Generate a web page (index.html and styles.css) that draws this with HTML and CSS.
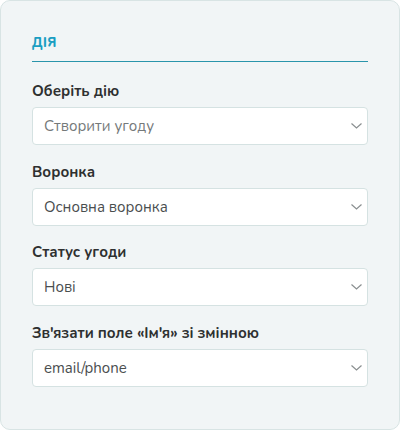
FILE: index.html
```html
<!DOCTYPE html>
<html lang="uk">
<head>
<meta charset="utf-8">
<link rel="stylesheet" href="styles.css">
</head>
<body>
<div class="card">
  <div class="title">Дія</div>
  <div class="fields">
    <div class="field">
      <div class="label">Оберіть дію</div>
      <div class="select placeholder"><span>Створити угоду</span><svg class="chev" width="11" height="6" viewBox="0 0 11 6"><path d="M0.5 0.5 L5.5 5 L10.5 0.5" fill="none" stroke="#8a8f90" stroke-width="1.2"/></svg></div>
    </div>
    <div class="field">
      <div class="label">Воронка</div>
      <div class="select"><span>Основна воронка</span><svg class="chev" width="11" height="6" viewBox="0 0 11 6"><path d="M0.5 0.5 L5.5 5 L10.5 0.5" fill="none" stroke="#8a8f90" stroke-width="1.2"/></svg></div>
    </div>
    <div class="field">
      <div class="label">Статус угоди</div>
      <div class="select"><span>Нові</span><svg class="chev" width="11" height="6" viewBox="0 0 11 6"><path d="M0.5 0.5 L5.5 5 L10.5 0.5" fill="none" stroke="#8a8f90" stroke-width="1.2"/></svg></div>
    </div>
    <div class="field">
      <div class="label">Зв'язати поле «Ім'я» зі змінною</div>
      <div class="select"><span>email/phone</span><svg class="chev" width="11" height="6" viewBox="0 0 11 6"><path d="M0.5 0.5 L5.5 5 L10.5 0.5" fill="none" stroke="#8a8f90" stroke-width="1.2"/></svg></div>
    </div>
  </div>
</div>
</body>
</html>
```
FILE: styles.css
```css
html, body {
  margin: 0;
  padding: 0;
  background: #ffffff;
}
body {
  font-family: "Nunito", "Lato", "Noto Sans", sans-serif;
}
.card {
  box-sizing: border-box;
  width: 400px;
  height: 430px;
  background: #f1f5f6;
  border: 1px solid #d8e4e4;
  border-radius: 10px;
  padding: 33px 31px 0 31px;
}
.title {
  font-size: 13px;
  font-weight: 800;
  text-transform: uppercase;
  letter-spacing: 0.4px;
  color: #1a9ec2;
  line-height: 18px;
  padding-bottom: 9px;
  border-bottom: 1px solid #2a95ab;
}
.fields {
  display: flex;
  flex-direction: column;
  gap: 16.67px;
  margin-top: 19px;
}
.field {
  display: flex;
  flex-direction: column;
  gap: 6px;
}
.label {
  font-size: 15px;
  font-weight: 700;
  color: #2e3030;
  line-height: 20px;
}
.select {
  box-sizing: border-box;
  height: 38px;
  background: #ffffff;
  border: 1px solid #d5e2e2;
  border-radius: 4px;
  display: flex;
  align-items: center;
  justify-content: space-between;
  padding: 0 5px 0 11px;
  font-size: 15px;
  color: #4a4e4f;
}
.select.placeholder {
  color: #75797a;
}
.chev {
  display: block;
}
```
